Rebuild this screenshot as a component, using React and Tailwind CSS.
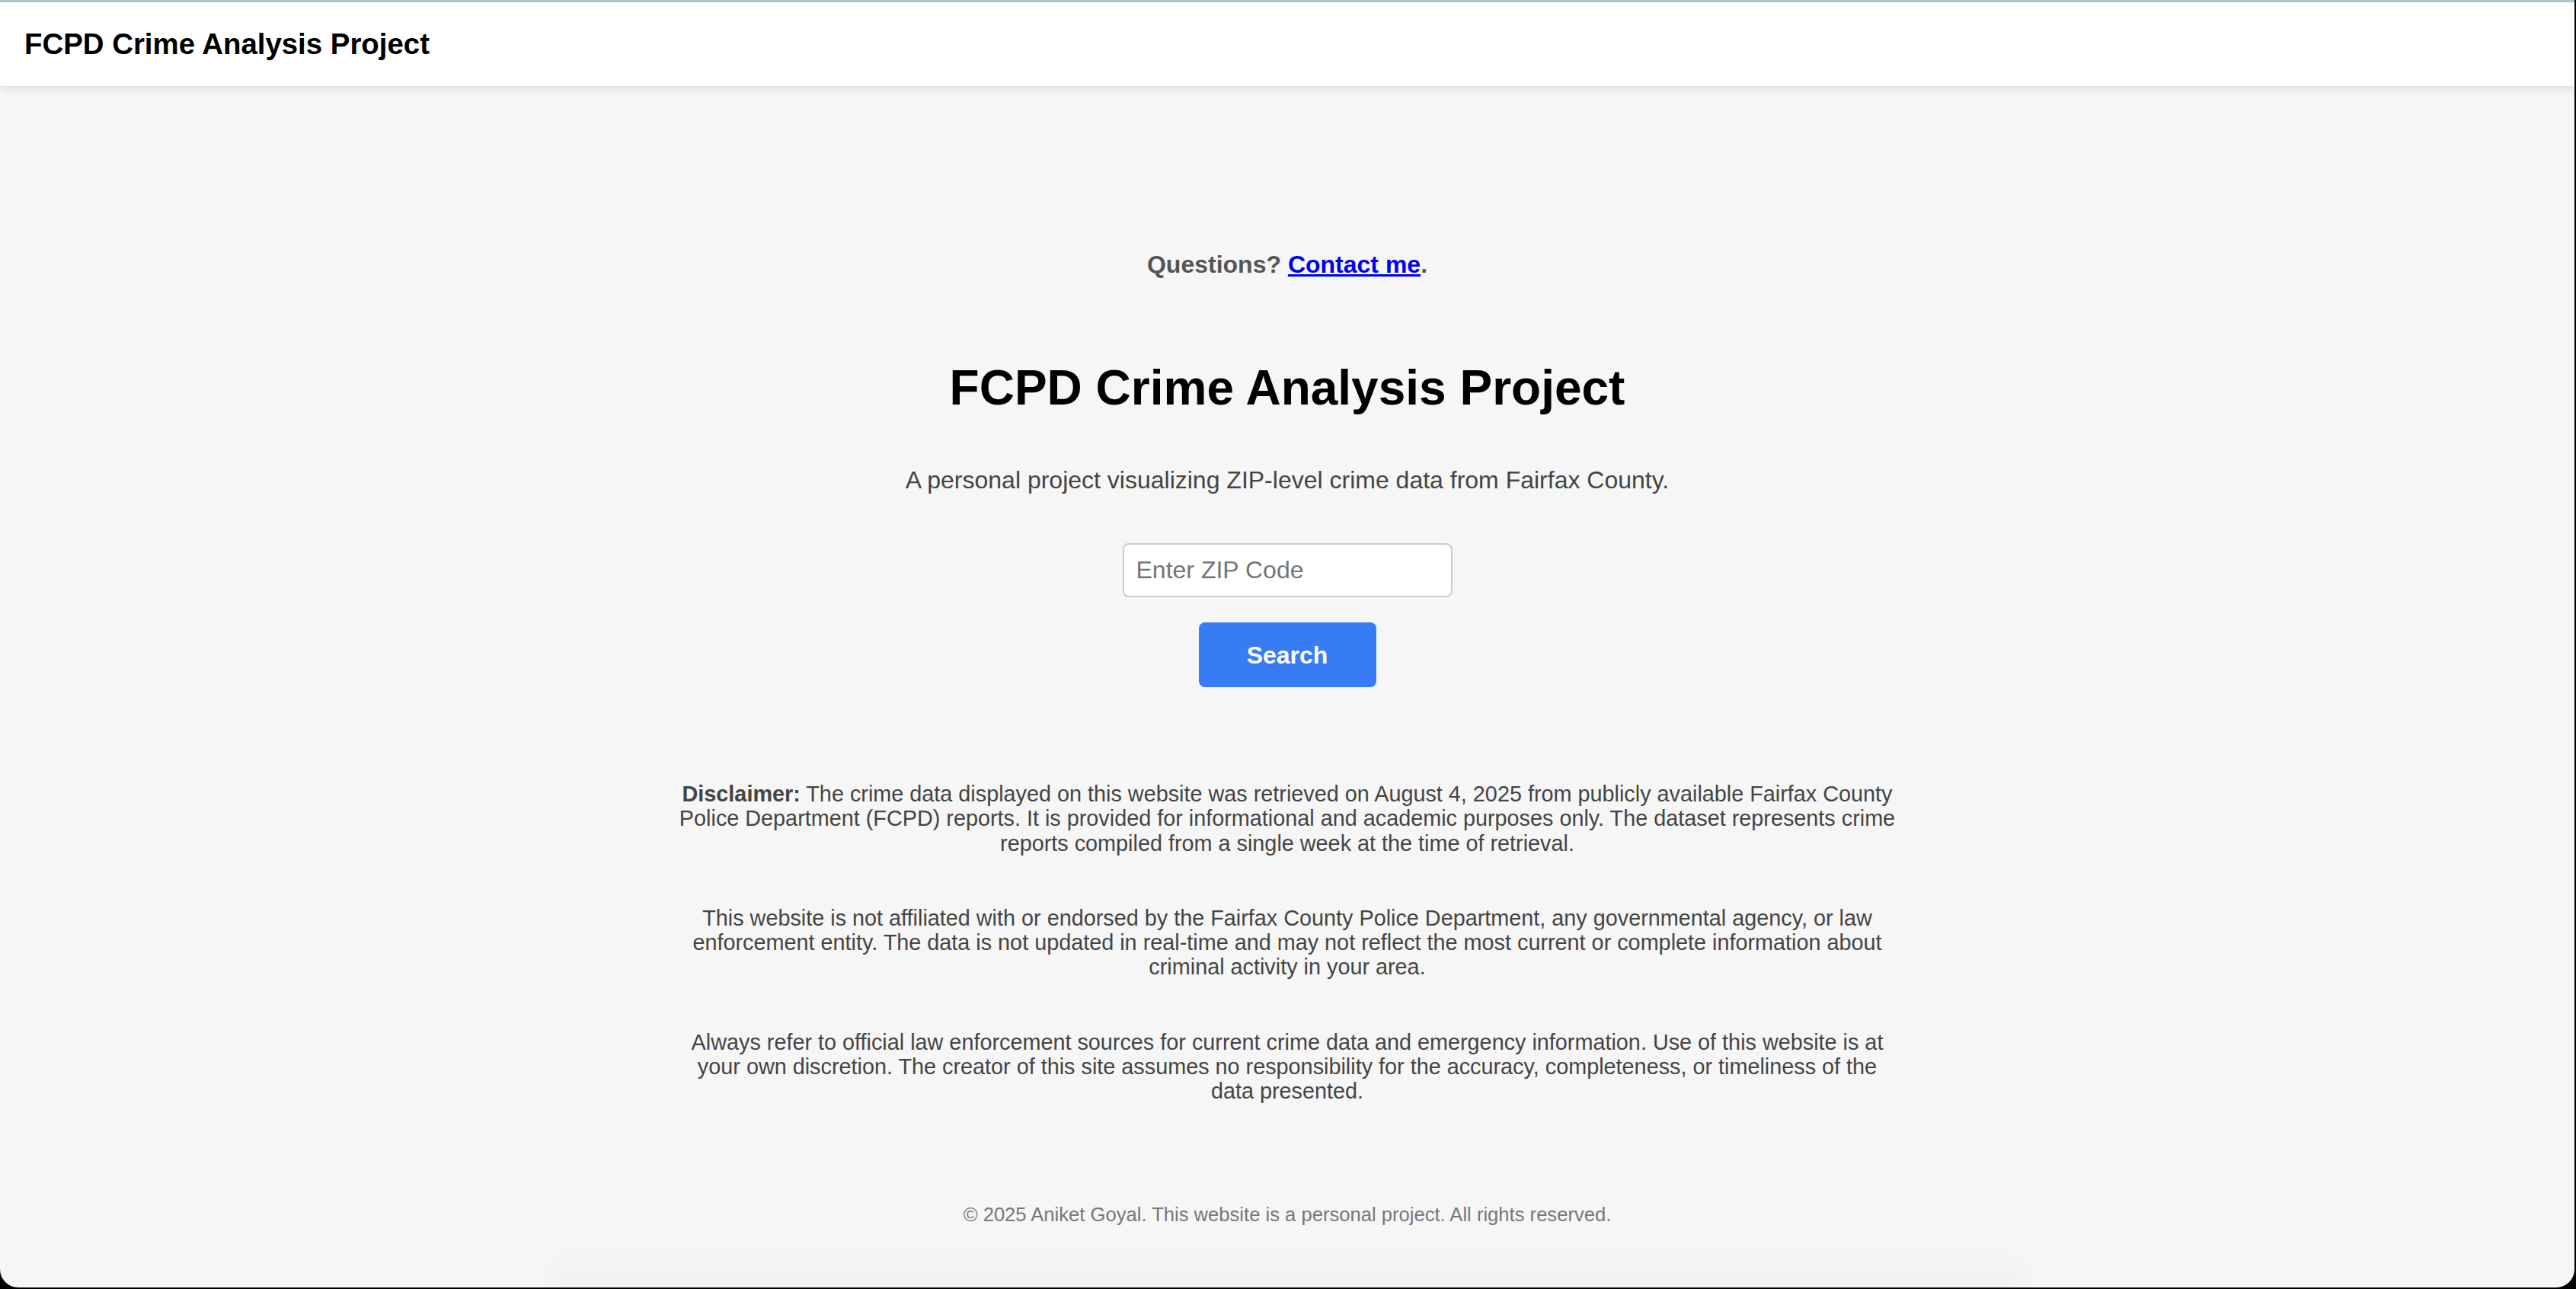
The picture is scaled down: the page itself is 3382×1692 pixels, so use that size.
import React from 'react';

const font = { fontFamily: '"Liberation Sans", Arial, Helvetica, sans-serif' };

function Header() {
  return (
    <header className="shrink-0 h-[110px] bg-white flex items-center px-[32px] shadow-[0_4px_10px_rgba(0,0,0,0.1)] relative z-10">
      <h1 className="text-[38.4px] leading-[46px] font-bold text-black">FCPD Crime Analysis Project</h1>
    </header>
  );
}

function SearchBox() {
  return (
    <div className="flex flex-col items-center">
      <input
        type="text"
        placeholder="Enter ZIP Code"
        className="w-[433px] h-[71px] px-[16px] text-[32px] bg-white border-2 border-[#cccccc] rounded-[8px] placeholder:text-[#757575] outline-none"
        style={font}
      />
      <button className="mt-[33px] w-[233px] h-[85px] bg-[#377bf5] text-white text-[32px] font-bold rounded-[8px]" style={font}>
        Search
      </button>
    </div>
  );
}

function Disclaimer() {
  return (
    <div className="w-[1600px] mx-auto flex flex-col gap-[66px] text-center text-[28.8px] leading-[32.3px] text-[#444]">
      <p>
        <strong>Disclaimer:</strong> The crime data displayed on this website was retrieved on August 4, 2025 from publicly
        available Fairfax County Police Department (FCPD) reports. It is provided for informational and academic purposes
        only. The dataset represents crime reports compiled from a single week at the time of retrieval.
      </p>
      <p>
        This website is not affiliated with or endorsed by the Fairfax County Police Department, any governmental agency, or
        law enforcement entity. The data is not updated in real-time and may not reflect the most current or complete
        information about criminal activity in your area.
      </p>
      <p>
        Always refer to official law enforcement sources for current crime data and emergency information. Use of this
        website is at your own discretion. The creator of this site assumes no responsibility for the accuracy,
        completeness, or timeliness of the data presented.
      </p>
    </div>
  );
}

export default function App() {
  return (
    <div className="w-[3382px] h-[1692px] bg-black overflow-hidden" style={font}>
      <div className="w-[3380px] h-[1690px] bg-[#f6f6f6] rounded-b-[24px] overflow-hidden border-t-[3px] border-[#a2c8cb] flex flex-col">
        <Header />
        <main className="shrink-0 flex flex-col items-center">
          <p className="mt-[216px] text-[32px] leading-[37px] font-bold text-[#555]">
            Questions?{' '}
            <a href="#" className="text-[#0000ee] underline decoration-[2.5px]">Contact me</a>.
          </p>
          <h2 className="mt-[106px] text-[64px] leading-[74px] font-bold text-black">FCPD Crime Analysis Project</h2>
          <p className="mt-[66px] text-[32px] leading-[37px] text-[#444]">
            A personal project visualizing ZIP-level crime data from Fairfax County.
          </p>
          <div className="mt-[64px]">
            <SearchBox />
          </div>
          <div className="mt-[124px]">
            <Disclaimer />
          </div>
          <footer className="mt-[131px] text-[25.6px] leading-[29.4px] text-[#777]">
            © 2025 Aniket Goyal. This website is a personal project. All rights reserved.
          </footer>
          <div className="mt-[31px] w-[1937px] h-[60px] rounded-t-[40px] bg-gradient-to-b from-transparent to-black/[0.025] blur-[14px]" />
        </main>
      </div>
    </div>
  );
}
